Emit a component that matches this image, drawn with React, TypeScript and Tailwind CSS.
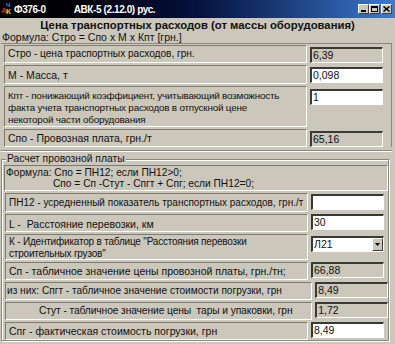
import React from "react";

const F = { fontFamily: '"Liberation Sans", Arial, sans-serif' };

function Label({ h, children, className = "" }: { h: string; children: React.ReactNode; className?: string }) {
  return (
    <div
      className={`w-[303px] ${h} whitespace-nowrap border-t border-l border-t-[#7d7a72] border-l-[#7d7a72] border-b border-r border-b-white border-r-white px-[3px] leading-[12px] text-[#111] ${className}`}
    >
      {children}
    </div>
  );
}

function Value({ v, white, className = "" }: { v: string; white?: boolean; className?: string }) {
  return (
    <div
      className={`w-[73px] h-[16px] border-t-2 border-l-2 border-t-[#3a3935] border-l-[#3a3935] border-b border-r border-b-white border-r-white px-[1px] text-[10.5px] leading-[13px] text-[#111] ${white ? "bg-white" : "bg-[#cbc7bb]"} ${className}`}
    >
      {v}
    </div>
  );
}

export default function App() {
  return (
    <div style={F} className="w-[395px] h-[344px] overflow-hidden bg-[#cbc7bb] relative flex flex-col">
      {/* Title bar */}
      <div className="h-[18px] flex items-center bg-gradient-to-r from-[#000000] via-[#06123e] to-[#3d7bd0] text-white text-[10px] tracking-[-0.4px] font-bold whitespace-nowrap">
        <div className="w-[12px] h-[14px] ml-[1px] relative tracking-normal">
          <span className="absolute left-0 top-[5px] text-[8px] leading-[8px] text-[#e02020]">А</span>
          <span className="absolute left-[5px] top-[0px] text-[6px] leading-[6px] text-[#30a0ff]">Ч</span>
          <span className="absolute left-[5px] top-[6px] text-[8px] leading-[8px] text-[#f0d000]">К</span>
        </div>
        <span className="ml-[1px]">Ф376-0</span>
        <span className="ml-[28px]">АВК-5 (2.12.0) рус.</span>
        <div className="ml-auto mr-[3px] flex gap-0">
          {["min", "max", "close"].map((k, i) => (
            <div
              key={k}
              className={`w-[11px] h-[10px] bg-[#cbc7bb] border-t border-l border-t-white border-l-white border-b border-r border-b-[#404040] border-r-[#404040] flex items-center justify-center ${i === 2 ? "ml-[1px]" : ""}`}
            >
              {k === "min" && <div className="w-[5px] h-[2px] bg-black mt-[4px]" />}
              {k === "max" && <div className="w-[7px] h-[6px] border border-black border-t-2" />}
              {k === "close" && (
                <svg width="7" height="6" viewBox="0 0 7 6">
                  <path d="M0.5 0.5 L6.5 5.5 M6.5 0.5 L0.5 5.5" stroke="#000" strokeWidth="1.5" />
                </svg>
              )}
            </div>
          ))}
        </div>
      </div>

      {/* Heading */}
      <div className="h-[12px] mt-[1px] text-center text-[11.3px] leading-[12px] font-bold text-[#111] whitespace-nowrap">
        Цена транспортных расходов (от массы оборудования)
      </div>
      <div className="h-[12px] pl-[2px] text-[10.5px] leading-[12px] text-[#111]">Формула: Стро = Спо х М х Кпт [грн.]</div>

      {/* Upper panel */}
      <div className="ml-[1px] w-[391px] border-t border-t-[#8a877f] border-r border-r-[#8a877f] pl-[3px] pt-[1px] flex flex-col gap-[2px]">
        <div className="flex items-start">
          <Label h="h-[18px]" className="pt-[2px] text-[10.2px] tracking-[-0.05px]">Стро - цена траспортных расходов, грн.</Label>
          <Value v="6,39" className="ml-[3px] mt-[2px]" />
        </div>
        <div className="flex items-start">
          <Label h="h-[19px]" className="pt-[3px] text-[10.5px]">М - Масса, т</Label>
          <Value v="0,098" white className="ml-[3px] mt-[2px]" />
        </div>
        <div className="flex items-start">
          <Label h="h-[41px]" className="pt-[3px] text-[9.9px] tracking-[-0.2px]">
            Кпт - понижающий коэффициент, учитывающий возможность
            <br />
            факта учета транспортных расходов в отпускной цене
            <br />
            некоторой части оборудования
          </Label>
          <Value v="1" white className="ml-[3px] mt-[3px]" />
        </div>
        <div className="flex items-start">
          <Label h="h-[18px]" className="pt-[2px] text-[10.5px]">Спо - Провозная плата, грн./т</Label>
          <Value v="65,16" className="ml-[3px] mt-[2px]" />
        </div>
      </div>

      {/* separator */}
      <div className="ml-[1px] w-[391px] h-[2px] mt-[3px] border-t border-t-[#8a877f] border-b border-b-white" />

      {/* Group box */}
      <div className="relative ml-[1px] w-[388px] mt-[7px] border border-[#8a877f] shadow-[inset_1px_1px_0_white,1px_1px_0_white] pl-[2px] pt-[5px] flex flex-col">
        <div className="absolute left-[4px] top-[-7px] bg-[#cbc7bb] px-[1px] text-[10.3px] leading-[12px] text-[#111] whitespace-nowrap">
          Расчет провозной платы
        </div>
        <div className="w-[384px] h-[26px] whitespace-nowrap border-t border-l border-t-[#7d7a72] border-l-[#7d7a72] border-b border-r border-b-white border-r-white pl-[1px] pt-[1px] text-[10.2px] leading-[11px] text-[#111]">
          Формула: Спо = ПН12; если ПН12&gt;0;
          <br />
          <span className="pl-[47px]">Спо = Сп -Стут - Спгт + Спг; если ПН12=0;</span>
        </div>
        <div className="flex flex-col gap-[2px] mt-[2px] pl-[1px]">
          <div className="flex items-start">
            <Label h="h-[19px]" className="pt-[3px] text-[10px]">ПН12 - усредненный показатель транспортных расходов, грн./т</Label>
            <Value v="" white className="ml-[3px] mt-[1px]" />
          </div>
          <div className="flex items-start">
            <Label h="h-[18px]" className="pt-[3px] text-[10.5px] whitespace-pre">L -  Расстояние перевозки, км</Label>
            <Value v="30" white className="ml-[3px]" />
          </div>
          <div className="flex items-start">
            <Label h="h-[26px]" className="pt-[1px] text-[10px] tracking-[-0.2px]">
              К - Идентификатор в таблице "Расстояния перевозки
              <br />
              строительных грузов"
            </Label>
            <div className="ml-[3px] mt-[2px] w-[73px] h-[16px] bg-white border-t-2 border-l-2 border-t-[#3a3935] border-l-[#3a3935] border-b border-r border-b-white border-r-white flex items-stretch text-[10.5px] leading-[13px] text-[#111]">
              <span className="flex-1 pl-[1px]">Л21</span>
              <div className="w-[11px] bg-[#cbc7bb] border-t border-l border-t-white border-l-white border-b border-r border-b-[#404040] border-r-[#404040] flex items-center justify-center">
                <svg width="5" height="3" viewBox="0 0 5 3">
                  <path d="M0 0 H5 L2.5 3 Z" fill="#000" />
                </svg>
              </div>
            </div>
          </div>
          <div className="flex items-start">
            <Label h="h-[18px]" className="pt-[2px] text-[10.5px]">Сп - табличное значение цены провозной платы, грн./тн;</Label>
            <Value v="66,88" className="ml-[3px]" />
          </div>
          <div className="flex items-start">
            <div className="w-[308px] h-[18px] whitespace-nowrap border-t border-l border-t-[#7d7a72] border-l-[#7d7a72] border-b border-r border-b-white border-r-white pl-[1px] pt-[2px] text-[10.1px] leading-[12px] text-[#111]">
              из них: Спгт - табличное значение стоимости погрузки, грн
            </div>
            <Value v="8,49" className="ml-[3px]" />
          </div>
          <div className="flex items-start">
            <div className="w-[308px] h-[18px] whitespace-pre border-t border-l border-t-[#7d7a72] border-l-[#7d7a72] border-b border-r border-b-white border-r-white pl-[33px] pt-[2px] text-[10.25px] tracking-[-0.1px] leading-[12px] text-[#111]">
              Стут - табличное значение цены  тары и упаковки, грн
            </div>
            <Value v="1,72" className="ml-[3px]" />
          </div>
          <div className="flex items-start">
            <Label h="h-[18px]" className="pt-[2px] text-[10.5px]">Спг - фактическая стоимость погрузки, грн</Label>
            <Value v="8,49" white className="ml-[3px]" />
          </div>
        </div>
      </div>
    </div>
  );
}
